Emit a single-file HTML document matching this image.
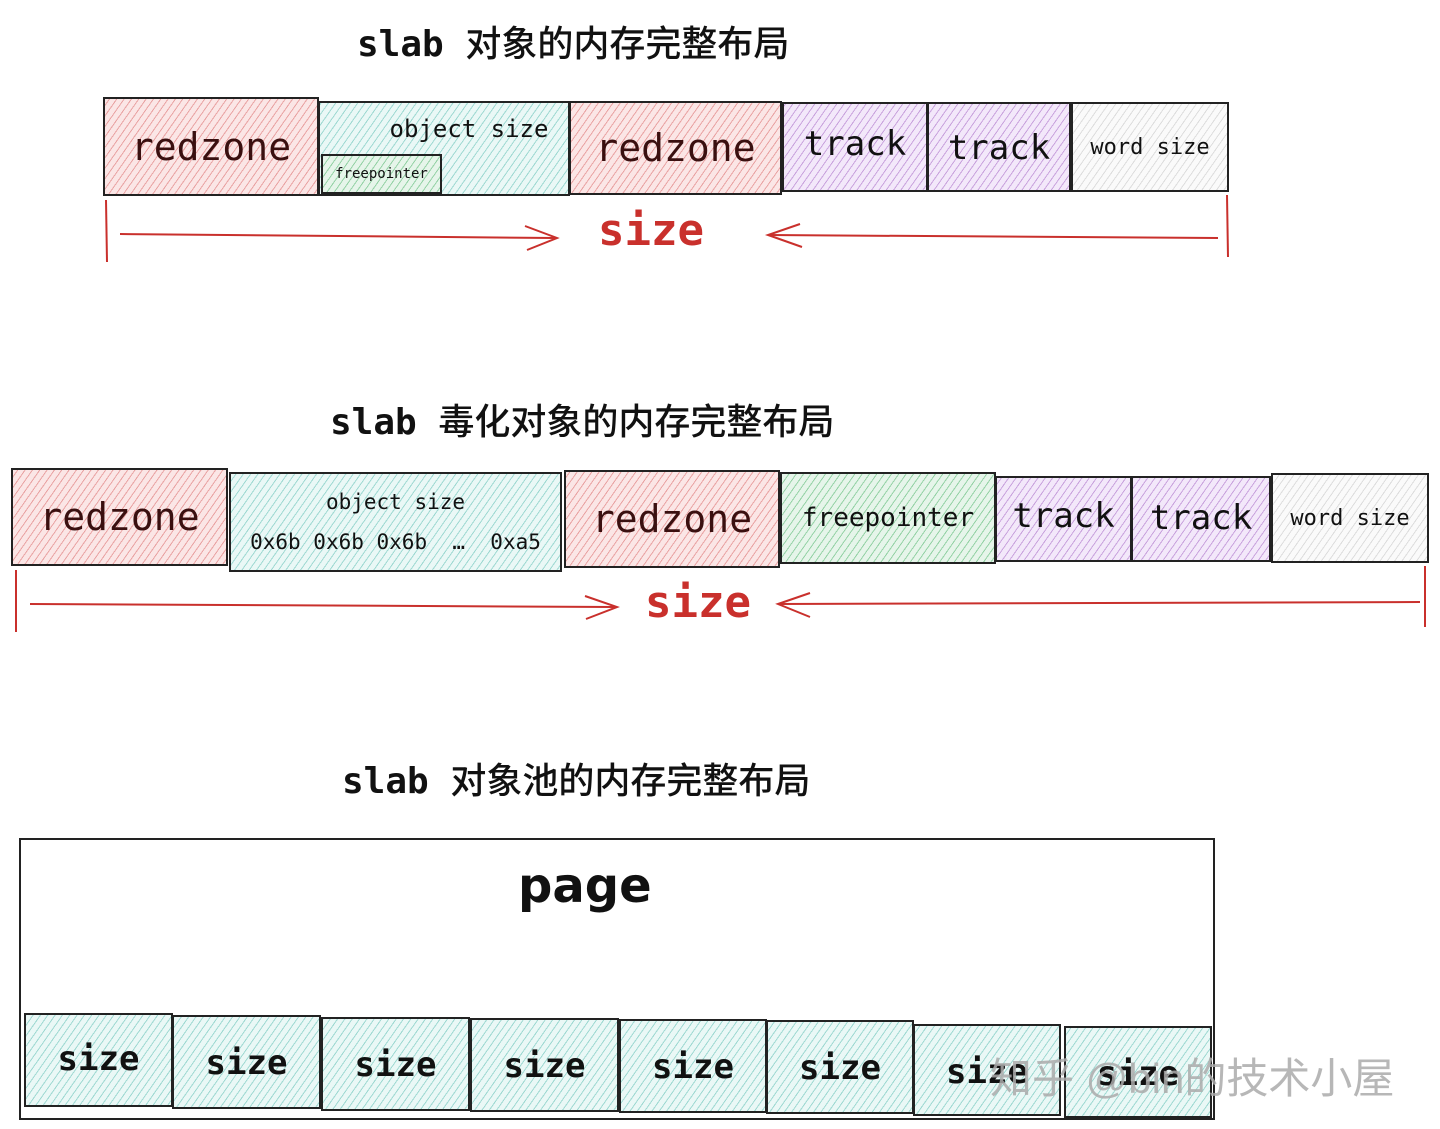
<!DOCTYPE html>
<html><head><meta charset="utf-8"><style>
body{margin:0;width:1440px;height:1129px;background:#fff;position:relative;overflow:hidden;font-family:"DejaVu Sans Mono","Noto Sans CJK SC",monospace;}
.b{position:absolute;box-sizing:border-box;border:2px solid #222;display:flex;align-items:center;justify-content:center;color:#111;font-weight:bold;white-space:nowrap;}
.r{background:repeating-linear-gradient(-55deg,#fbe6e6 0 2px,#e9a3a3 2px 3px,#fbe6e6 3px 6px);color:#3a1010;}
.t{background:repeating-linear-gradient(-55deg,#eaf8f6 0 2px,#9fd9d2 2px 3px,#eaf8f6 3px 6px);}
.g{background:repeating-linear-gradient(-55deg,#e6f5ea 0 2px,#95d2a6 2px 3px,#e6f5ea 3px 6px);}
.p{background:repeating-linear-gradient(-55deg,#f3e8fa 0 2px,#c9a3dd 2px 3px,#f3e8fa 3px 6px);}
.w{background:repeating-linear-gradient(-55deg,#fafafa 0 2px,#ddd 2px 3px,#fafafa 3px 6px);}
.h{position:absolute;font-size:36px;color:#111;white-space:nowrap;}
.h b{font-weight:bold;}
.h span{font-family:"Noto Sans CJK SC",sans-serif;font-weight:500;}
.sz{position:absolute;color:#c9302c;font-size:44px;font-weight:bold;}
</style></head><body>
<div class="h" style="left:357px;top:15px"><b>slab</b> <span>对象的内存完整布局</span></div>
<div class="b r" style="left:103px;top:97px;width:216px;height:99px;font-size:38px;font-weight:normal">redzone</div>
<div class="b t" style="left:318px;top:101px;width:252px;height:95px;align-items:flex-start;padding-top:12px;padding-left:50px;font-size:24px;font-weight:normal">object size</div>
<div class="b g" style="left:321px;top:154px;width:121px;height:40px;font-size:14px;font-weight:normal">freepointer</div>
<div class="b r" style="left:569px;top:101px;width:213px;height:94px;font-size:38px;font-weight:normal">redzone</div>
<div class="b p" style="left:782px;top:102px;width:146px;height:90px;font-size:34px;font-weight:normal;align-items:flex-start;padding-top:20px">track</div>
<div class="b p" style="left:927px;top:102px;width:144px;height:90px;font-size:34px;font-weight:normal;align-items:flex-start;padding-top:24px">track</div>
<div class="b w" style="left:1071px;top:102px;width:158px;height:90px;font-size:22px;font-weight:normal">word size</div>
<div class="sz" style="left:598px;top:205px">size</div>

<div class="h" style="left:330px;top:393px"><b>slab</b> <span>毒化对象的内存完整布局</span></div>
<div class="b r" style="left:11px;top:468px;width:217px;height:98px;font-size:38px;font-weight:normal">redzone</div>
<div class="b t" style="left:229px;top:472px;width:333px;height:100px;flex-direction:column;font-size:21px;font-weight:normal"><div>object size</div><div style="margin-top:16px">0x6b 0x6b 0x6b &nbsp;… &nbsp;0xa5</div></div>
<div class="b r" style="left:564px;top:470px;width:216px;height:98px;font-size:38px;font-weight:normal">redzone</div>
<div class="b g" style="left:780px;top:472px;width:216px;height:92px;font-size:26px;font-weight:normal">freepointer</div>
<div class="b p" style="left:995px;top:476px;width:137px;height:86px;font-size:34px;font-weight:normal;align-items:flex-start;padding-top:18px">track</div>
<div class="b p" style="left:1131px;top:476px;width:140px;height:86px;font-size:34px;font-weight:normal;align-items:flex-start;padding-top:20px">track</div>
<div class="b w" style="left:1271px;top:473px;width:158px;height:90px;font-size:22px;font-weight:normal">word size</div>
<div class="sz" style="left:645px;top:577px">size</div>

<div class="h" style="left:342px;top:752px"><b>slab</b> <span>对象池的内存完整布局</span></div>
<div class="b" style="left:19px;top:838px;width:1196px;height:282px;border-width:2px;background:#fff"></div>
<div style="position:absolute;left:518px;top:858px;font-family:'DejaVu Sans',sans-serif;font-size:48px;font-weight:bold;color:#111">page</div>
<div class="b t" style="left:24px;top:1013px;width:149px;height:94px;font-size:34px;align-items:flex-start;padding-top:24px">size</div>
<div class="b t" style="left:172px;top:1015px;width:149px;height:94px;font-size:34px;align-items:flex-start;padding-top:26px">size</div>
<div class="b t" style="left:321px;top:1017px;width:149px;height:94px;font-size:34px;align-items:flex-start;padding-top:26px">size</div>
<div class="b t" style="left:470px;top:1018px;width:149px;height:94px;font-size:34px;align-items:flex-start;padding-top:26px">size</div>
<div class="b t" style="left:619px;top:1019px;width:148px;height:94px;font-size:34px;align-items:flex-start;padding-top:26px">size</div>
<div class="b t" style="left:766px;top:1020px;width:148px;height:94px;font-size:34px;align-items:flex-start;padding-top:26px">size</div>
<div class="b t" style="left:913px;top:1024px;width:148px;height:92px;font-size:34px;align-items:flex-start;padding-top:26px">size</div>
<div class="b t" style="left:1064px;top:1026px;width:148px;height:92px;font-size:34px;align-items:flex-start;padding-top:26px">size</div>
<div style="position:absolute;left:990px;top:1045px;font-family:'Liberation Sans','Noto Sans CJK SC',sans-serif;font-size:42px;color:rgba(170,170,170,0.85);white-space:nowrap">知乎 @bin的技术小屋</div>

<svg width="1440" height="1129" style="position:absolute;left:0;top:0" fill="none" stroke="#c9302c" stroke-width="2">
<path d="M106 200 L107 262"/><path d="M1227 195 L1228 257"/>
<path d="M120 234 L555 238"/><path d="M525 226 L557 238 L527 250"/>
<path d="M768 235 L1218 238"/><path d="M800 224 L768 235 L802 247"/>
<path d="M16 570 L16 632"/><path d="M1425 566 L1425 627"/>
<path d="M30 604 L615 607"/><path d="M585 596 L617 607 L586 619"/>
<path d="M778 604 L1420 602"/><path d="M810 593 L778 604 L810 617"/>
</svg>
</body></html>
